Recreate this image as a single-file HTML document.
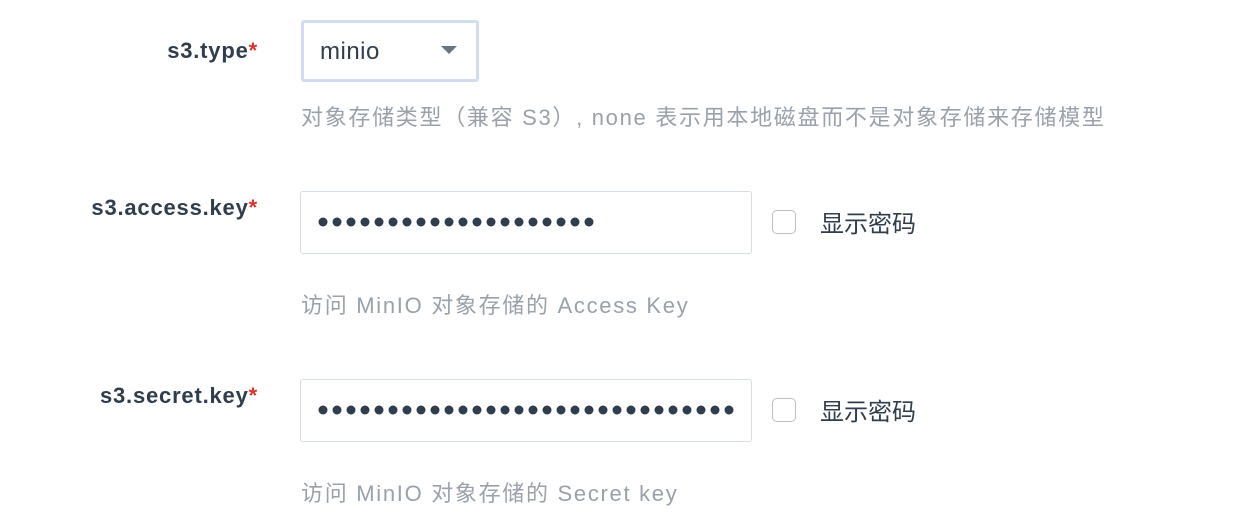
<!DOCTYPE html>
<html><head><meta charset="utf-8"><style>
body{margin:0;width:1260px;height:520px;background:#fff;font-family:"Liberation Sans","Noto Sans CJK SC",sans-serif;position:relative;overflow:hidden}
.a{position:absolute}
.lbl{right:1002px;font-size:22px;letter-spacing:0.8px;font-weight:bold;color:#2f3d4c;white-space:nowrap}
.lbl b{color:#d9352b}
.help{left:301px;font-size:22px;letter-spacing:1.7px;color:#9aa1aa;white-space:nowrap}
.inp{left:300px;width:452px;height:63px;border:1px solid #d6dce3;border-radius:3px;box-sizing:border-box}
.cb{left:772px;width:24px;height:24px;border:1px solid #b9c0c8;border-radius:5px;box-sizing:border-box}
.ct{left:820px;font-size:24px;color:#2f3d4c}
</style></head><body>
<div class="a lbl" style="top:38px">s3.type<b>*</b></div>
<div class="a" style="left:301px;top:20px;width:178px;height:62px;border:1px solid #d6dce3;border-radius:3px;box-sizing:border-box;box-shadow:inset 0 0 0 2px #cfdcf5"></div>
<div class="a" style="left:320px;top:38px;font-size:24px;letter-spacing:0.5px;color:#2f3d4c">minio</div>
<svg class="a" style="left:441px;top:46px" width="16" height="9"><path d="M0 0H16L8 8Z" fill="#6b7580"/></svg>
<div class="a help" style="top:100px">对象存储类型（兼容 S3）, none 表示用本地磁盘而不是对象存储来存储模型</div>

<div class="a lbl" style="top:195px">s3.access.key<b>*</b></div>
<div class="a inp" style="top:191px"></div>
<svg class="a" style="left:317px;top:215px" width="290" height="14"><g fill="#2f3d4c">
<circle cx="6" cy="7" r="4.5"/><circle cx="20" cy="7" r="4.5"/><circle cx="34" cy="7" r="4.5"/><circle cx="48" cy="7" r="4.5"/><circle cx="62" cy="7" r="4.5"/><circle cx="76" cy="7" r="4.5"/><circle cx="90" cy="7" r="4.5"/><circle cx="104" cy="7" r="4.5"/><circle cx="118" cy="7" r="4.5"/><circle cx="132" cy="7" r="4.5"/><circle cx="146" cy="7" r="4.5"/><circle cx="160" cy="7" r="4.5"/><circle cx="174" cy="7" r="4.5"/><circle cx="188" cy="7" r="4.5"/><circle cx="202" cy="7" r="4.5"/><circle cx="216" cy="7" r="4.5"/><circle cx="230" cy="7" r="4.5"/><circle cx="244" cy="7" r="4.5"/><circle cx="258" cy="7" r="4.5"/><circle cx="272" cy="7" r="4.5"/></g></svg>
<div class="a cb" style="top:210px"></div>
<div class="a ct" style="top:204px">显示密码</div>
<div class="a help" style="top:288px">访问 MinIO 对象存储的 Access Key</div>

<div class="a lbl" style="top:383px">s3.secret.key<b>*</b></div>
<div class="a inp" style="top:379px"></div>
<svg class="a" style="left:317px;top:403px" width="430" height="14"><g fill="#2f3d4c">
<circle cx="6" cy="7" r="4.5"/><circle cx="20" cy="7" r="4.5"/><circle cx="34" cy="7" r="4.5"/><circle cx="48" cy="7" r="4.5"/><circle cx="62" cy="7" r="4.5"/><circle cx="76" cy="7" r="4.5"/><circle cx="90" cy="7" r="4.5"/><circle cx="104" cy="7" r="4.5"/><circle cx="118" cy="7" r="4.5"/><circle cx="132" cy="7" r="4.5"/><circle cx="146" cy="7" r="4.5"/><circle cx="160" cy="7" r="4.5"/><circle cx="174" cy="7" r="4.5"/><circle cx="188" cy="7" r="4.5"/><circle cx="202" cy="7" r="4.5"/><circle cx="216" cy="7" r="4.5"/><circle cx="230" cy="7" r="4.5"/><circle cx="244" cy="7" r="4.5"/><circle cx="258" cy="7" r="4.5"/><circle cx="272" cy="7" r="4.5"/><circle cx="286" cy="7" r="4.5"/><circle cx="300" cy="7" r="4.5"/><circle cx="314" cy="7" r="4.5"/><circle cx="328" cy="7" r="4.5"/><circle cx="342" cy="7" r="4.5"/><circle cx="356" cy="7" r="4.5"/><circle cx="370" cy="7" r="4.5"/><circle cx="384" cy="7" r="4.5"/><circle cx="398" cy="7" r="4.5"/><circle cx="412" cy="7" r="4.5"/></g></svg>
<div class="a cb" style="top:398px"></div>
<div class="a ct" style="top:392px">显示密码</div>
<div class="a help" style="top:476px">访问 MinIO 对象存储的 Secret key</div>
</body></html>
